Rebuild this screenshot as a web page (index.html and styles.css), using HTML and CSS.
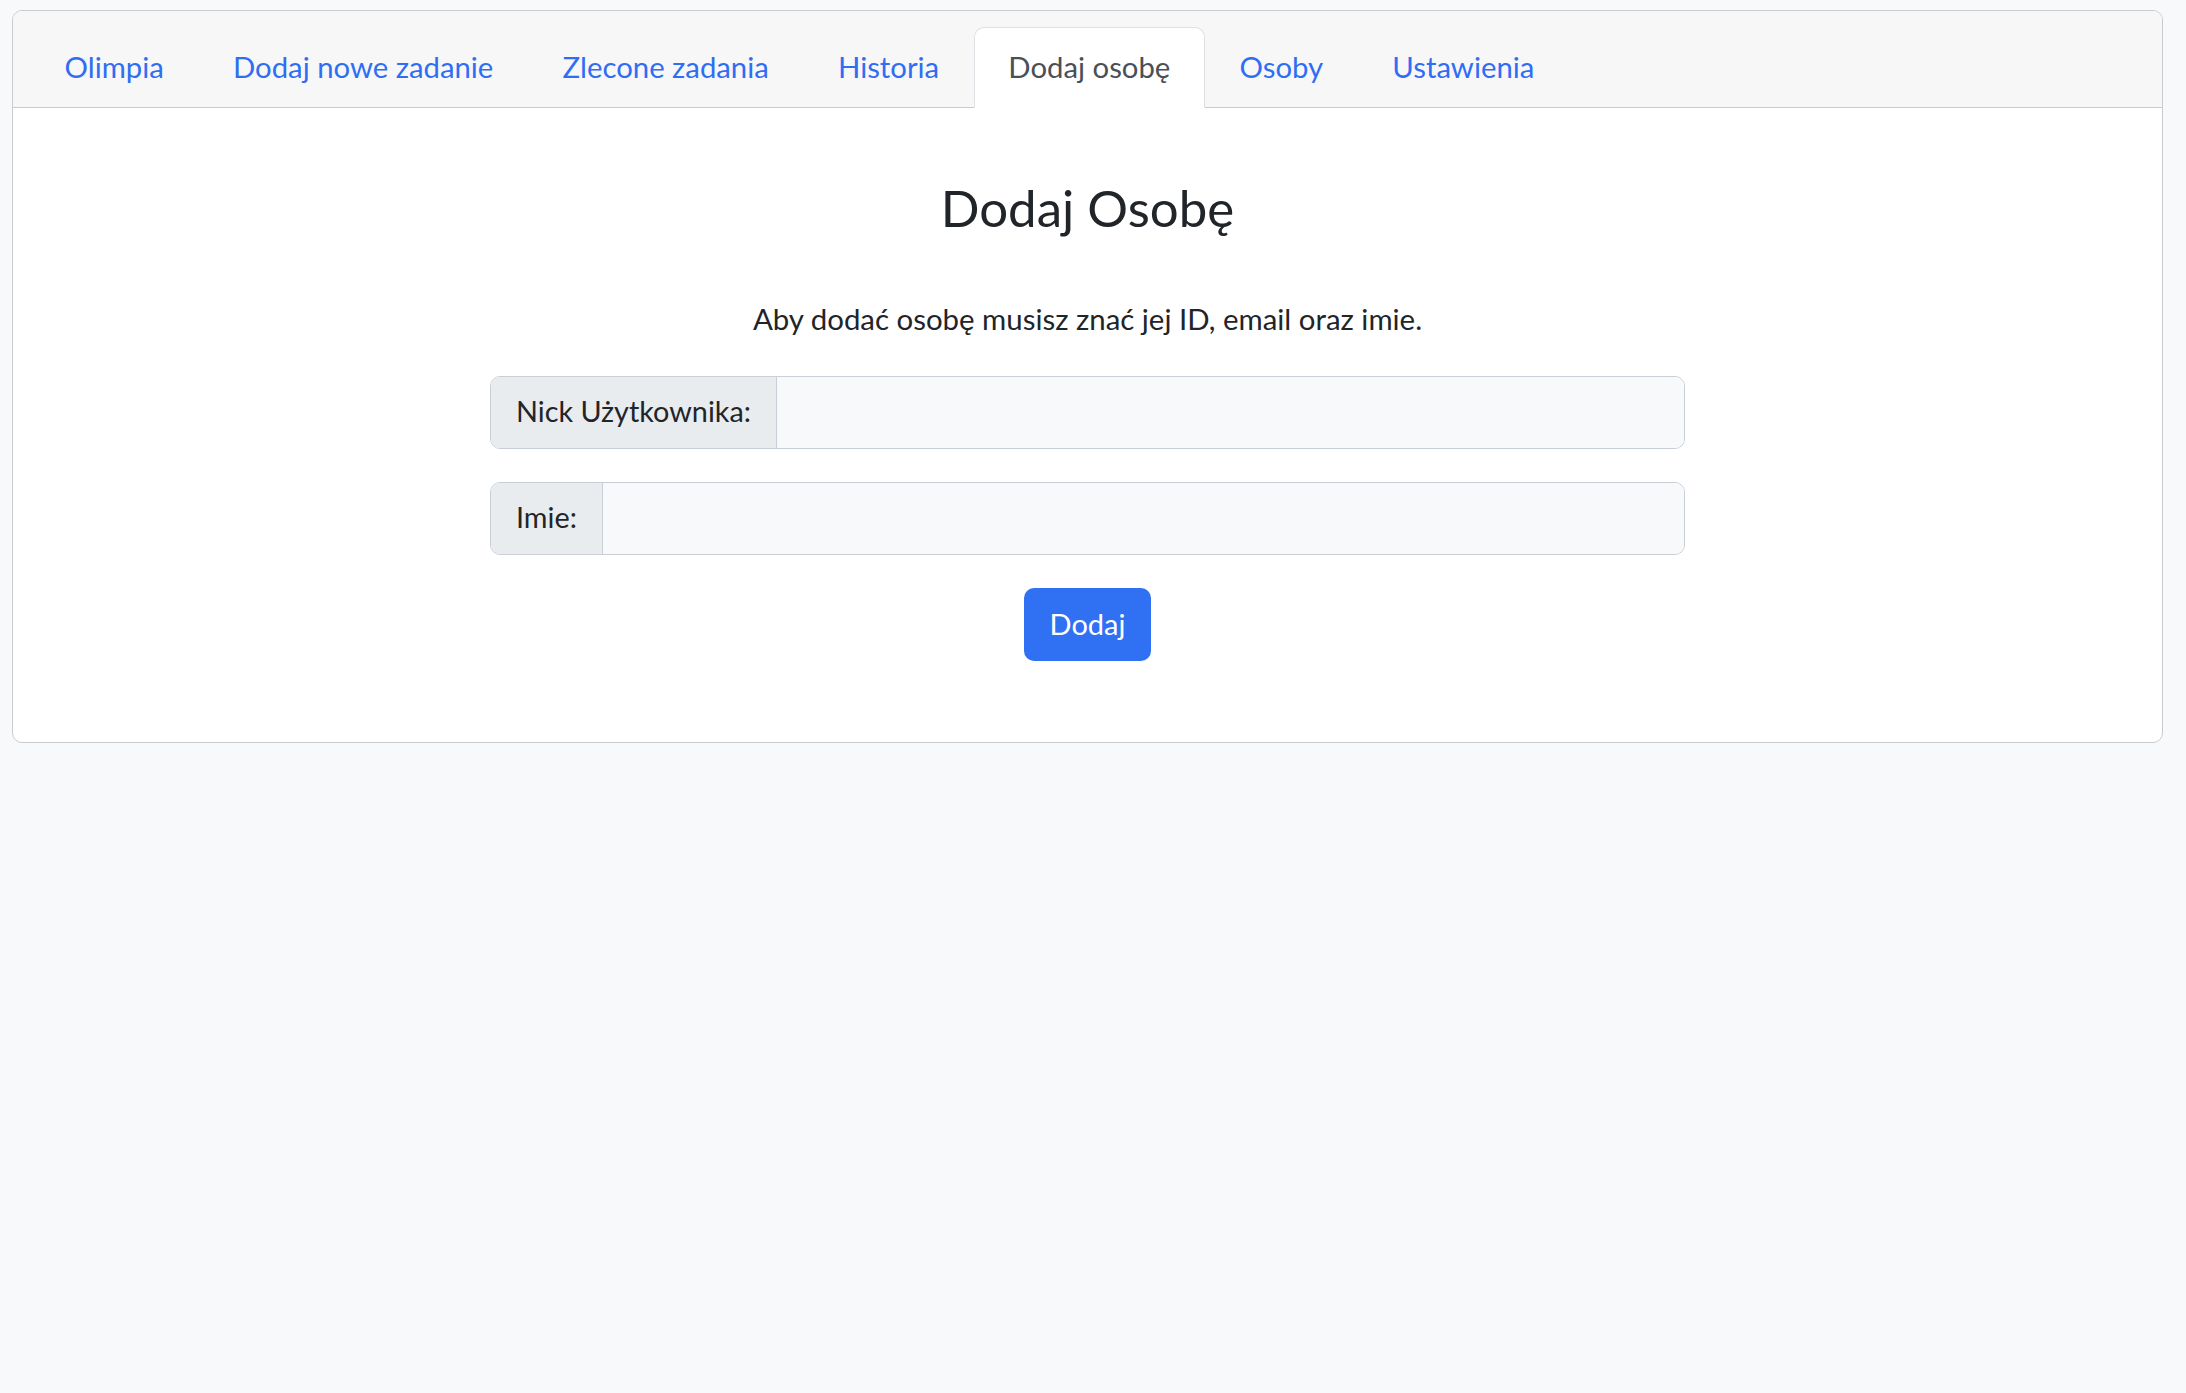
FILE: index.html
```html
<!DOCTYPE html>
<html lang="pl">
<head>
<meta charset="utf-8">
<title>Dodaj Osobę</title>
<link rel="stylesheet" href="styles.css">
</head>
<body>
<div class="card">
  <div class="card-header">
    <ul class="tabs">
      <li><a class="tab" href="#">Olimpia</a></li>
      <li><a class="tab" href="#">Dodaj nowe zadanie</a></li>
      <li><a class="tab" href="#">Zlecone zadania</a></li>
      <li><a class="tab" href="#">Historia</a></li>
      <li><a class="tab active" href="#">Dodaj osobę</a></li>
      <li><a class="tab" href="#">Osoby</a></li>
      <li><a class="tab" href="#">Ustawienia</a></li>
    </ul>
  </div>
  <div class="card-body">
    <h3 class="title">Dodaj Osobę</h3>
    <p class="desc">Aby dodać osobę musisz znać jej ID, email oraz imie.</p>
    <form class="form">
      <div class="input-group">
        <span class="input-label">Nick Użytkownika:</span>
        <input class="input" type="text">
      </div>
      <div class="input-group">
        <span class="input-label">Imie:</span>
        <input class="input" type="text">
      </div>
      <button class="btn" type="button">Dodaj</button>
    </form>
  </div>
</div>
</body>
</html>
```
FILE: styles.css
```css
* { box-sizing: border-box; }
html, body { margin: 0; }
body {
  background: #f8f9fa;
  font-family: Lato, "Open Sans", sans-serif;
  color: #212529;
  padding: 10px 23px 0 12px;
}
.card {
  background: #fff;
  border: 1px solid #cbcbcb;
  border-radius: 10px;
  overflow: hidden;
}
.card-header {
  background: #f7f7f7;
  border-bottom: 1px solid #cbcbcb;
  padding: 16px 17px 0;
}
.tabs {
  list-style: none;
  margin: 0 0 -1px;
  padding: 0;
  display: flex;
}
.tab {
  display: block;
  padding: 16px 33.6px 18px;
  font-size: 29.3px;
  line-height: 45px;
  color: #2f6ef3;
  text-decoration: none;
  border: 1px solid transparent;
  border-radius: 10px 10px 0 0;
}
.tab.active {
  color: #495057;
  background: #fff;
  border-color: #dee2e6 #dee2e6 #fff;
}
.card-body {
  display: flex;
  flex-direction: column;
  align-items: center;
  padding: 69px 0 81px;
}
.title {
  margin: 0;
  font-size: 51px;
  line-height: 62px;
  font-weight: 400;
}
.desc {
  margin: 57px 0 0;
  font-size: 29.4px;
  line-height: 45px;
}
.form {
  display: flex;
  flex-direction: column;
  align-items: center;
  gap: 33px;
  margin-top: 35px;
}
.input-group {
  display: flex;
  width: 1195px;
  height: 73px;
  border: 1px solid #c9cfd6;
  border-radius: 10px;
  overflow: hidden;
}
.input-label {
  display: flex;
  align-items: center;
  padding: 0 25px 3px;
  background: #e9ecef;
  border-right: 1px solid #c9cfd6;
  font-size: 28.8px;
}
.input {
  flex: 1;
  border: 0;
  background: #f8f9fa;
  font: inherit;
  font-size: 28.8px;
  padding: 0 24px;
}
.btn {
  height: 73px;
  padding: 0 26px 3px;
  background: #3070f2;
  color: #fff;
  border: 0;
  border-radius: 10px;
  font-family: inherit;
  font-size: 29px;
}
```
